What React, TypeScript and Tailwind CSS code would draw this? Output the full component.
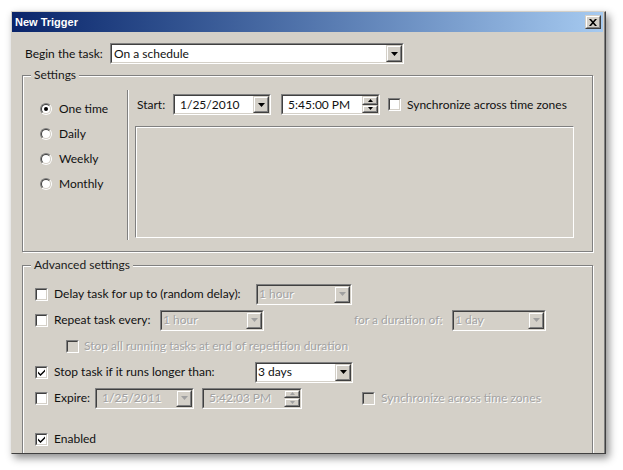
import React from 'react';

const dim = 'text-[#a3a3a3] [text-shadow:1px_1px_0_#ffffff]';

function Raised({ className = '', children }: { className?: string; children?: React.ReactNode }) {
  return (
    <div className={`border border-t-[#d4d0c8] border-l-[#d4d0c8] border-r-[#404040] border-b-[#404040] bg-[#d4d0c8] ${className}`}>
      <div className="h-full w-full border border-t-white border-l-white border-r-[#808080] border-b-[#808080] flex items-center justify-center">
        {children}
      </div>
    </div>
  );
}

function Sunken({ className = '', inner = '', children }: { className?: string; inner?: string; children?: React.ReactNode }) {
  return (
    <div className={`border border-t-[#808080] border-l-[#808080] border-r-white border-b-white ${className}`}>
      <div className={`h-full w-full border border-t-[#404040] border-l-[#404040] border-r-[#d4d0c8] border-b-[#d4d0c8] flex items-center ${inner}`}>
        {children}
      </div>
    </div>
  );
}

function Arrow({ disabled }: { disabled?: boolean }) {
  return (
    <svg width="7" height="4" viewBox="0 0 7 4">
      <polygon points="0,0 7,0 3.5,4" fill={disabled ? '#a0a0a0' : '#000'} />
    </svg>
  );
}

function Combo({ value, w, disabled, pad = 'pl-[1px]' }: { value: string; w: string; disabled?: boolean; pad?: string }) {
  return (
    <Sunken className={`h-[21px] ${w}`} inner={disabled ? 'bg-[#d4d0c8]' : 'bg-white'}>
      <span className={`flex-1 leading-none whitespace-nowrap ${pad} ${disabled ? dim : ''}`}>{value}</span>
      <Raised className="w-[16px] h-full">
        <Arrow disabled={disabled} />
      </Raised>
    </Sunken>
  );
}

function Spin({ value, w, disabled }: { value: string; w: string; disabled?: boolean }) {
  return (
    <Sunken className={`h-[21px] ${w}`} inner={disabled ? 'bg-[#d4d0c8]' : 'bg-white'}>
      <span className={`flex-1 leading-none whitespace-nowrap pl-[5px] ${disabled ? dim : ''}`}>{value}</span>
      <div className="w-[16px] h-full flex flex-col">
        <Raised className="flex-1">
          <svg width="5" height="3" viewBox="0 0 5 3"><polygon points="2.5,0 5,3 0,3" fill={disabled ? '#a0a0a0' : '#000'} /></svg>
        </Raised>
        <Raised className="flex-1">
          <svg width="5" height="3" viewBox="0 0 5 3"><polygon points="0,0 5,0 2.5,3" fill={disabled ? '#a0a0a0' : '#000'} /></svg>
        </Raised>
      </div>
    </Sunken>
  );
}

function Check({ checked, disabled }: { checked?: boolean; disabled?: boolean }) {
  return (
    <Sunken className="w-[13px] h-[13px] shrink-0" inner={`justify-center ${disabled ? 'bg-[#d4d0c8]' : 'bg-white'}`}>
      {checked && (
        <svg width="7" height="7" viewBox="0 0 7 7">
          <path d="M0 2.5 L2.5 5 L7 0.5 L7 2.5 L2.5 7 L0 4.5 Z" fill="#000" />
        </svg>
      )}
    </Sunken>
  );
}

function Radio({ checked }: { checked?: boolean }) {
  return (
    <div className="w-[12px] h-[12px] rounded-full border border-t-[#808080] border-l-[#808080] border-r-white border-b-white shrink-0">
      <div className="w-full h-full rounded-full bg-white border border-t-[#404040] border-l-[#404040] border-r-[#d4d0c8] border-b-[#d4d0c8] flex items-center justify-center">
        {checked && <div className="w-[4px] h-[4px] rounded-full bg-black" />}
      </div>
    </div>
  );
}

function Group({ label, className = '', children }: { label: string; className?: string; children?: React.ReactNode }) {
  return (
    <div className={`relative border border-[#808080] shadow-[inset_1px_1px_0_#ffffff,1px_1px_0_#ffffff] ${className}`}>
      <span className="absolute -top-[9px] left-[8px] px-[3px] bg-[#d4d0c8] leading-[16px] text-[#1a1a1a]">{label}</span>
      {children}
    </div>
  );
}

export default function App() {
  const radios = ['One time', 'Daily', 'Weekly', 'Monthly'];
  return (
    <div className="w-[623px] h-[470px] bg-white pt-[11px] pl-[11px] font-['Lato',sans-serif] text-[12px] text-[#111]">
      <div className="w-[595px] h-[443px] bg-[#d4d0c8] border border-t-[#d4d0c8] border-l-[#d4d0c8] border-r-[#404040] border-b-[#404040] shadow-[3px_4px_8px_rgba(0,0,0,0.45)] overflow-hidden">
        <div className="h-full border-r border-r-[#808080] flex flex-col">
          {/* title bar */}
          <div className="h-[20px] shrink-0 mr-[1px] flex items-center justify-between pl-[3px] pr-[2px] bg-linear-to-r from-[#0a246a] to-[#a6caf0]">
            <span className="font-['Liberation_Sans',sans-serif] font-bold text-[11px] text-white leading-none">New Trigger</span>
            <Raised className="w-[16px] h-[14px]">
              <svg width="8" height="7" viewBox="0 0 8 7">
                <path d="M0 0 L2 0 L4 2.2 L6 0 L8 0 L5 3.5 L8 7 L6 7 L4 4.8 L2 7 L0 7 L3 3.5 Z" fill="#000" />
              </svg>
            </Raised>
          </div>

          {/* begin the task */}
          <div className="mt-[11px] pl-[13px] h-[21px] shrink-0 flex items-center">
            <span className="w-[85px] whitespace-nowrap">Begin the task:</span>
            <Combo value="On a schedule" w="w-[294px]" pad="pl-[2px]" />
          </div>

          {/* settings */}
          <Group label="Settings" className="mt-[11px] ml-[10px] w-[571px] h-[177px] shrink-0 flex">
            <div className="w-[104px] pt-[20px] pl-[17px]">
              {radios.map((r, i) => (
                <div key={r} className="h-[25px] flex items-center gap-[7px]">
                  <Radio checked={i === 0} />
                  <span>{r}</span>
                </div>
              ))}
            </div>
            <div className="mt-[14px] h-[150px] w-[2px] border-l border-l-[#808080] border-r border-r-white" />
            <div className="pl-[6px]">
              <div className="mt-[18px] h-[21px] flex items-center">
                <span className="w-[38px] pl-[2px]">Start:</span>
                <Combo value="1/25/2010" w="w-[98px]" pad="pl-[5px]" />
                <div className="ml-[10px]">
                  <Spin value="5:45:00 PM" w="w-[99px]" />
                </div>
                <div className="ml-[8px]"><Check /></div>
                <span className="ml-[6px] whitespace-nowrap">Synchronize across time zones</span>
              </div>
              <div className="mt-[11px] w-[439px] h-[112px] border border-t-[#808080] border-l-[#808080] border-r-white border-b-white shadow-[inset_1px_1px_0_#ffffff]" />
            </div>
          </Group>

          {/* advanced settings */}
          <Group label="Advanced settings" className="mt-[13px] ml-[10px] w-[571px] h-[200px] shrink-0 pt-[15px] pl-[12px]">
            <div className="h-[26px] flex items-center">
              <Check />
              <span className="ml-[6px] w-[202px] whitespace-nowrap">Delay task for up to (random delay):</span>
              <Combo value="1 hour" w="w-[96px]" disabled />
            </div>
            <div className="h-[26px] flex items-center">
              <Check />
              <span className="ml-[6px] w-[106px] whitespace-nowrap">Repeat task every:</span>
              <Combo value="1 hour" w="w-[104px]" disabled />
              <span className={`ml-[90px] w-[98px] whitespace-nowrap ${dim}`}>for a duration of:</span>
              <Combo value="1 day" w="w-[94px]" disabled />
            </div>
            <div className="h-[26px] flex items-center pl-[31px]">
              <Check disabled />
              <span className={`ml-[5px] whitespace-nowrap ${dim}`}>Stop all running tasks at end of repetition duration</span>
            </div>
            <div className="h-[26px] flex items-center">
              <Check checked />
              <span className="ml-[6px] w-[201px] whitespace-nowrap">Stop task if it runs longer than:</span>
              <Combo value="3 days" w="w-[98px]" />
            </div>
            <div className="h-[26px] flex items-center">
              <Check />
              <span className="ml-[6px] w-[41px] whitespace-nowrap">Expire:</span>
              <Combo value="1/25/2011" w="w-[99px]" pad="pl-[5px]" disabled />
              <div className="ml-[8px]">
                <Spin value="5:42:03 PM" w="w-[100px]" disabled />
              </div>
              <div className="ml-[60px]"><Check disabled /></div>
              <span className={`ml-[6px] whitespace-nowrap ${dim}`}>Synchronize across time zones</span>
            </div>
            <div className="mt-[15px] h-[26px] flex items-center">
              <Check checked />
              <span className="ml-[6px]">Enabled</span>
            </div>
          </Group>
        </div>
      </div>
    </div>
  );
}
